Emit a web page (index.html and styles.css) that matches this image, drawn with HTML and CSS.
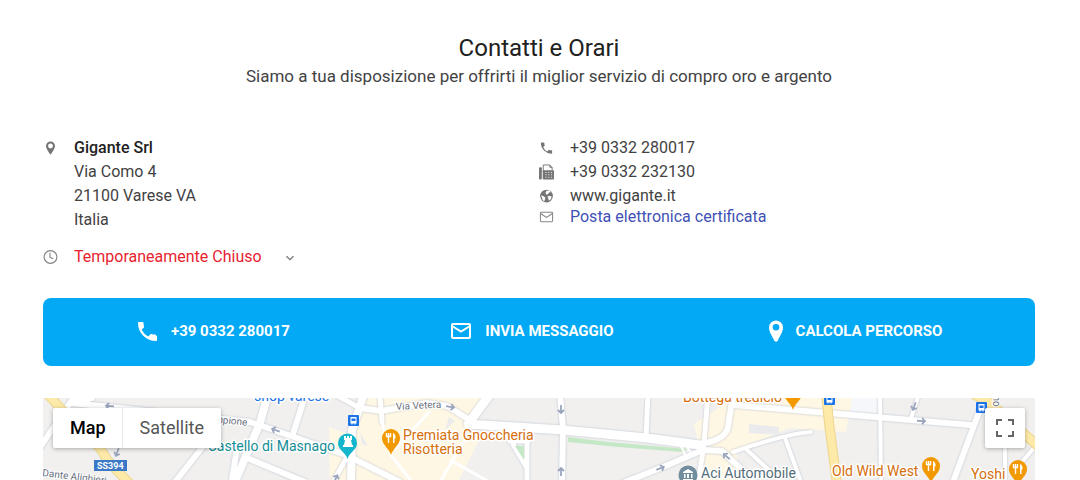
FILE: index.html
```html
<!DOCTYPE html>
<html lang="it">
<head>
<meta charset="utf-8">
<meta name="viewport" content="width=device-width, initial-scale=1">
<title>Contatti e Orari</title>
<link rel="stylesheet" href="styles.css">
</head>
<body>
<main class="page">
  <header class="intro">
    <h1 class="title">Contatti e Orari</h1>
    <p class="subtitle">Siamo a tua disposizione per offrirti il miglior servizio di compro oro e argento</p>
  </header>

  <section class="contacts">
    <div class="column">
      <div class="row">
        <svg class="icon" viewBox="0 0 16 16"><path fill="#757575" fill-rule="evenodd" d="M8 1a4.8 4.8 0 0 0-4.8 4.8C3.200 9 8 15 8 15s4.800-6 4.800-9.200A4.800 4.800 0 0 0 8 1zm0 2.200a2.600 2.600 0 1 1 0 5.200 2.600 2.600 0 0 1 0-5.200z"/></svg>
        <address class="address"><strong class="company">Gigante Srl</strong><br>Via Como 4<br>21100 Varese VA<br>Italia</address>
      </div>
      <button class="row hours" type="button">
        <svg class="icon" viewBox="0 0 16 16" fill="none" stroke="#858585" stroke-width="1.200"><circle cx="8" cy="8" r="6.800"/><path d="M7.500 3.500v5l3.500 1.200"/></svg>
        <span>Temporaneamente Chiuso</span>
        <svg class="chevron" viewBox="0 0 10 10" fill="none" stroke="#777" stroke-width="1.300"><path d="M1.500 3.200 5 6.700l3.500-3.500"/></svg>
      </button>
    </div>
    <div class="column">
      <div class="row">
        <svg class="icon" viewBox="0 0 24 24"><path fill="#757575" d="M6.600 10.800a15 15 0 0 0 6.600 6.600l2.200-2.200c.300-.300.700-.400 1-.200 1.100.400 2.300.600 3.600.600.600 0 1 .400 1 1V20c0 .600-.400 1-1 1A17 17 0 0 1 3 4c0-.600.400-1 1-1h3.500c.600 0 1 .400 1 1 0 1.300.200 2.500.600 3.600.100.300 0 .700-.200 1z"/></svg>
        <span>+39 0332 280017</span>
      </div>
      <div class="row">
        <svg class="icon" viewBox="0 0 16 16"><rect y="3" width="3" height="13" rx="1" fill="#757575"/><path fill="#fff" stroke="#757575" d="M4.500 8V.5h7L14 3v5z"/><path fill="none" stroke="#757575" d="M11.500.5V3H14"/><rect x="4" y="6" width="12" height="10" rx="1" fill="#757575"/><path fill="#fff" d="M7 8h1v1H7zm3 0h1v1h-1zm3 0h1v1h-1zM7 10.500h1v1H7zm3 0h1v1h-1zm3 0h1v1h-1zM7 13h1v1H7zm3 0h1v1h-1zm3 0h1v1h-1z"/></svg>
        <span>+39 0332 232130</span>
      </div>
      <div class="row">
        <svg class="icon" viewBox="0 0 16 16"><circle cx="8" cy="8" r="6.800" fill="#757575"/><path fill="#fff" d="m8 2.500 3-.3 1.500 1.600-1.700.400L9.500 6 7.500 6.300 7 4.500zM2.200 7.500l2.300.5 2.200 1.700-.2 1.800-1 2.300-1.500-1.500zM9 8.500l2.500-.8 2 1-.8 2.500L10.500 13 10 10.800z"/></svg>
        <a class="site" href="#sito">www.gigante.it</a>
      </div>
      <div class="row row-tight">
        <svg class="icon" viewBox="0 0 16 16" fill="none" stroke="#858585" stroke-width="1.100"><rect x="1.500" y="3" width="13" height="10" rx="1"/><path d="m2 4.500 6 4 6-4"/></svg>
        <a class="mail" href="#pec">Posta elettronica certificata</a>
      </div>
    </div>
  </section>

  <nav class="actions">
    <a class="action" href="#telefono">
      <svg class="action-icon" viewBox="0 0 24 24"><path fill="#fff" d="M6.600 10.800a15 15 0 0 0 6.600 6.600l2.200-2.200c.300-.300.700-.400 1-.200 1.100.400 2.300.600 3.600.600.600 0 1 .400 1 1l1 .400V21c0 .600-.400 1-1 1A18 18 0 0 1 3 4c0-.600.400-1 1-1h3.500c.600 0 1 .400 1 1 0 1.300.200 2.500.600 3.600.100.300 0 .700-.200 1z"/></svg>
      <span>+39 0332 280017</span>
    </a>
    <a class="action" href="#messaggio">
      <svg class="action-icon" viewBox="0 0 24 24" fill="none" stroke="#fff" stroke-width="2"><rect x="3" y="5" width="18" height="14" rx="1"/><path d="m3 7 9 5.500L21 7"/></svg>
      <span>INVIA MESSAGGIO</span>
    </a>
    <a class="action action-route" href="#percorso">
      <svg class="action-icon" viewBox="0 0 24 24"><path fill="#fff" fill-rule="evenodd" d="M12 1.500a7 7 0 0 0-7 7c0 4.500 3.200 8.500 5.200 13 .700 1.600 2.900 1.600 3.600 0 2-4.500 5.200-8.500 5.200-13a7 7 0 0 0-7-7zM12 5a3.300 3.300 0 1 1 0 6.600A3.300 3.300 0 0 1 12 5z"/></svg>
      <span>CALCOLA PERCORSO</span>
    </a>
  </nav>

  <section class="map" aria-label="Mappa">
    <svg class="map-canvas" viewBox="43 398 992 82" preserveAspectRatio="xMidYMin slice">
      <defs>
        <g id="bus"><rect width="11" height="11" rx="1" fill="#1a73e8"/><path fill="#fff" d="M2.500 2h6v6.500h-1v1h-1v-1h-2v1h-1v-1h-1z"/><path fill="#1a73e8" d="M3.500 3.500h4V6h-4z"/></g>
        <g id="food"><path fill="#f29900" d="M0 17C-2 10-9 7-9 0A9 9 0 0 1 9 0C9 7 2 10 0 17z"/><path fill="none" stroke="#fff" stroke-width="1.400" d="M-4.500-5v3.500h4V-5M-2.500-5V5"/><path fill="#fff" d="M2-5q3 1 2.500 5.500h-1V5H2z"/></g>
        <path id="arrow" fill="none" stroke="#9aa4bd" stroke-width="1.800" d="M-5 0H3M0-3l3 3-3 3"/>
      </defs>
      <rect x="43" y="398" width="992" height="820" fill="#f1f0ef"/>
      <g fill="#fef7e4">
        <path d="M366 398h116l-14 26 12 14-22 44H330l-1-55 21 8z"/>
        <path d="M694 424l40-26h118l-6 34-56-4-54 22 4 32h-42v-40z"/>
      </g>
      <path fill="#ebebed" d="M749 424l30 3v8l-30-2zM449 417l6 4-10 9zM360 432l8 14-6-2z"/>
      <path fill="#f6f7fa" d="M852 398h28v18l-30-2z"/>
      <g class="roads">
        <path stroke-width="6" d="M75 396 40 447M92 398 71 403 110 407 250 422 262 426 346 455 400 482M305 396 293 434M247 458 305 482M208 440 175 482M237 448 232 480"/>
        <path stroke-width="8" d="M268 394 260 423 234 484M364 394 352 430 351 484"/>
        <path stroke-width="5" d="M347 457 332 484M338 396 360 408M380 396 382 422"/>
        <path stroke-width="6" d="M360 408 381 411 427 403 447 406 468 419"/>
        <path stroke-width="9" d="M490 394 468 424 563 430 647 438 700 445"/>
        <path stroke-width="5" d="M527 438V484M508 430 514 446 527 468M510 441H528M648 394 646 438M708 394 704 444 698 484"/>
        <path stroke-width="6" d="M560 394 563 428 562 484M620 484 663 467 703 450 722 451 757 484M733 394 728 427Q726 440 700 444"/>
        <path stroke-width="4" d="M733 452Q785 434 811 432M747 450 782 482M785 438 801 482"/>
        <path stroke-width="6" d="M733 405 793 410 970 425M982 404 953 482"/>
        <path stroke-width="4" d="M880 394 881 484M919 394 911 418M1005 446V484M1034 448 1015 470"/>
      </g>
      <path class="lane" d="M382 422 391 455 412 482M430 411 394 450M468 434 440 482M450 460 500 488"/>
      <path fill="#c4e8c5" d="M568 437l40 5 80 7-6 3-64-5-50-5zM515 446h9v14z"/>
      <path fill="none" stroke="#fff" stroke-width="2" d="M681 446 686 457M687 447 692 455"/>
      <g fill="none" stroke-linejoin="round">
        <path stroke="#edd58c" stroke-width="10" d="M44 390 62 410 100 448 108 461 130 484M826 392 829 423 837 484M970 392 990 403 1040 448"/>
        <path stroke="#fdeaa8" stroke-width="8" d="M44 390 62 410 100 448 108 461 130 484M826 392 829 423 837 484M970 392 990 403 1040 448"/>
      </g>
      <use href="#arrow" transform="translate(109 406) rotate(185)"/>
      <use href="#arrow" transform="translate(117 453) rotate(110)"/>
      <use href="#arrow" transform="translate(275 430) rotate(200)"/>
      <use href="#arrow" transform="translate(336 478) rotate(-65)"/>
      <use href="#arrow" transform="translate(451 407) rotate(10)"/>
      <use href="#arrow" transform="translate(561 410) rotate(90)"/>
      <use href="#arrow" transform="translate(561 471) rotate(-90)"/>
      <use href="#arrow" transform="translate(661 468) rotate(-22)"/>
      <use href="#arrow" transform="translate(726 456) rotate(220)"/>
      <use href="#arrow" transform="translate(922 421) rotate(3)"/>
      <use href="#arrow" transform="translate(914 407) rotate(110)"/>

      <use href="#bus" x="348" y="415"/>
      <use href="#bus" x="824" y="394"/>
      <use href="#bus" x="976" y="402"/>

      <rect x="94" y="460" width="33" height="11" fill="#3b78c6"/>
      <text class="shield" x="97" y="469">SS394</text>
      <g class="street">
        <text transform="translate(202 421) rotate(6)">Campione</text>
        <text transform="translate(42 476) rotate(7)">Dante Alighieri</text>
        <text transform="translate(396 410) rotate(-3)">Via Vetera</text>
        <text transform="translate(993 380) rotate(90)">Como</text>
      </g>
      <g class="place">
        <text class="shop" x="254" y="401">shop varese</text>
        <text class="castle" x="335" y="451" text-anchor="end">Castello di Masnago</text>
        <text class="eat" x="403" y="440">Premiata Gnoccheria</text>
        <text class="eat" x="403" y="454">Risotteria</text>
        <text class="eat" x="683" y="402">Bottega tredicio</text>
        <text class="eat" x="832" y="476">Old Wild West</text>
        <text class="eat" x="971" y="479">Yoshi</text>
        <text class="office" x="701" y="478">Aci Automobile</text>
      </g>
      <path fill="#12b5cb" d="M347.500 459c-2-7-9.500-9-9.500-16a9.500 9.500 0 0 1 19 0c0 7-7.500 9-9.500 16z"/>
      <path fill="#fff" d="M344 436h2v2h1v-2h2v2h1v-2h2v4h-1l1 5h1v2h-10v-2h1l1-5h-1z"/>
      <use href="#food" x="391" y="438"/>
      <use href="#food" x="793" y="393"/>
      <use href="#food" x="931" y="466"/>
      <use href="#food" x="1018" y="469"/>
      <circle cx="688" cy="475" r="9.500" fill="#6f8d9c"/>
      <path fill="#fff" d="m683 472 5-3 5 3v1h-10zm1 2h1.500v4H684zm3 0h2v4h-2zm4 0h1.500v4H691zm-8 5h10v1h-10z"/>
    </svg>
    <div class="map-controls">
      <div class="map-types">
        <button class="map-type map-type-active" type="button">Map</button>
        <button class="map-type" type="button">Satellite</button>
      </div>
      <button class="fullscreen" type="button" aria-label="Schermo intero">
        <svg class="fullscreen-icon" viewBox="0 0 18 18"><path fill="none" stroke="#666" stroke-width="2" d="M1 6V1h5M12 1h5v5M17 12v5h-5M6 17H1v-5"/></svg>
      </button>
    </div>
  </section>
</main>
</body>
</html>
```
FILE: styles.css
```css
* { box-sizing: border-box; }
body {
  margin: 0;
  background: #fff;
  color: #212121;
  font-family: Roboto, "Liberation Sans", sans-serif;
  font-size: 16px;
  line-height: 24px;
}
a { color: inherit; text-decoration: none; }
button { font: inherit; border: 0; background: none; cursor: pointer; }

.page {
  min-height: 100vh;
  display: flex;
  flex-direction: column;
  padding: 32px 45px 0 43px;
}
.intro { text-align: center; margin-bottom: 48px; }
.title { margin: 0; font-size: 24px; line-height: 32px; font-weight: 400; }
.subtitle { margin: 0; font-size: 17px; font-weight: 400; color: #424242; }

.contacts {
  display: grid;
  grid-template-columns: 1fr 1fr;
  margin-bottom: 29px;
  color: #424242;
}
.row { display: flex; align-items: flex-start; gap: 16px; }
.icon { flex: none; width: 15px; height: 16px; margin-top: 4px; }
.address { font-style: normal; }
.company { font-weight: 500; color: #212121; }
.hours {
  width: 100%;
  margin-top: 13px;
  padding: 0;
  color: #e8232f;
}
.hours .chevron { width: 10px; height: 10px; margin: 8px 0 0 7px; }
.row-tight { margin-top: -3px; }
.mail { color: #3f51b5; }

.actions {
  display: grid;
  grid-template-columns: 22fr 22fr 19fr;
  align-items: center;
  min-height: 68px;
  margin-bottom: 32px;
  padding: 0 0 2px 92px;
  border-radius: 8px;
  background: #03a9f4;
  color: #fff;
}
.action {
  display: flex;
  align-items: center;
  gap: 12px;
  font-size: 15px;
  font-weight: 700;
  white-space: nowrap;
}
.action-route { gap: 8px; }
.action-icon { flex: none; width: 24px; height: 24px; }

.map {
  position: relative;
  flex: 1;
  min-height: 82px;
  overflow: hidden;
  background: #f1f0ef;
}
.map-canvas { position: absolute; inset: 0; width: 100%; height: 100%; }
.map-controls {
  position: relative;
  display: flex;
  justify-content: space-between;
  padding: 10px;
}
.map-types {
  display: flex;
  border-radius: 2px;
  background: #fff;
  box-shadow: 0 1px 4px rgba(0, 0, 0, .3);
}
.map-type { height: 40px; padding: 0 17px; font-size: 18px; color: #565656; }
.map-type-active { padding-right: 16px; color: #000; font-weight: 500; border-right: 1px solid #e6e6e6; }
.fullscreen {
  display: flex;
  align-items: center;
  justify-content: center;
  width: 40px;
  height: 40px;
  padding: 0;
  border-radius: 2px;
  background: #fff;
  box-shadow: 0 1px 4px rgba(0, 0, 0, .3);
}
.fullscreen-icon { width: 18px; height: 18px; }

.roads {
  fill: none;
  stroke: #fff;
  stroke-linecap: round;
  stroke-linejoin: round;
  filter: drop-shadow(0 0 1px #b9bfcc);
}
.lane { fill: none; stroke: #fff; stroke-width: 3px; }
.place text {
  font-size: 14px;
  stroke: #fff;
  stroke-width: 3px;
  stroke-linejoin: round;
  paint-order: stroke;
}
.street text { font-size: 10px; fill: #6b7280; stroke: #fff; stroke-width: 2px; paint-order: stroke; }
.shield { font-size: 9px; font-weight: 700; fill: #fff; }
.shop { fill: #1a73e8; }
.castle { fill: #138d96; }
.eat { fill: #d56e0c; }
.office { fill: #546e7a; }

@media (max-width: 800px) {
  .contacts, .actions { grid-template-columns: 1fr; }
  .actions { padding: 16px 24px; row-gap: 16px; }
}
```
